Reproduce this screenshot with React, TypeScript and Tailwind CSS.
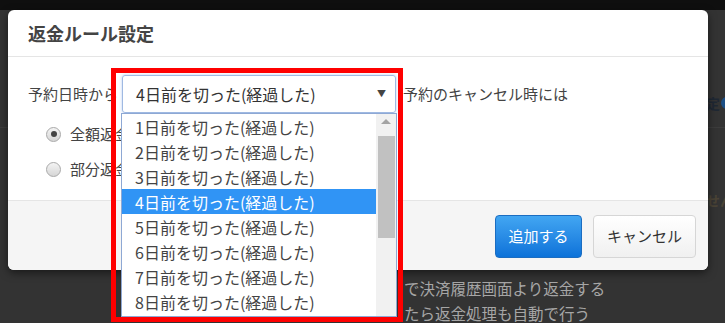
import React from 'react';

const font = { fontFamily: '"Noto Sans CJK JP", "Noto Sans", sans-serif' };

const options = Array.from({ length: 8 }, (_, i) => `${i + 1}日前を切った(経過した)`);

const Radio: React.FC<{ checked?: boolean }> = ({ checked }) => (
  <span className="flex h-[15px] w-[15px] items-center justify-center rounded-full border border-[#a9a9a9] bg-gradient-to-b from-[#f4f4f4] to-[#d6d6d6]">
    {checked && <span className="h-[6px] w-[6px] rounded-full bg-[#444]" />}
  </span>
);

const App: React.FC = () => {
  return (
    <div className="relative h-[323px] w-[725px] overflow-hidden bg-[#333333]" style={font}>
      {/* dimmed page behind the modal */}
      <div className="h-[10px] bg-[#0f0f0f]" />
      <div className="flex flex-col">
        <div className="flex h-[118px] items-start border-b border-[#3c3c3c] pl-[692px] pt-[83px] text-[14px] font-bold text-[#1f2833]">
          <span className="whitespace-nowrap leading-[20px]">設定</span>
          <span className="ml-[1px] mt-[4px] h-[12px] w-[12px] shrink-0 rounded-full bg-[#1c4f85]" />
        </div>
        <div className="h-[62px] pl-[692px] pt-[62px] text-[14px] font-bold whitespace-nowrap text-[#4a4336]">
          設せん
        </div>
        <div className="mt-[86px] pl-[404px] text-[15.5px] leading-[25px] whitespace-nowrap text-[#a6a6a6]">
          <p>で決済履歴画面より返金する</p>
          <p>たら返金処理も自動で行う</p>
        </div>
      </div>

      {/* modal */}
      <div className="absolute left-[8px] top-[10px] flex h-[260px] w-[700px] flex-col overflow-hidden rounded-[6px] bg-white shadow-[0_3px_9px_rgba(0,0,0,0.5)]">
        <div className="flex h-[47px] items-center border-b border-[#e5e5e5] pl-[20px]">
          <h3 className="text-[18px] font-bold text-[#444]">返金ルール設定</h3>
        </div>
        <div className="flex h-[143px] flex-col pl-[20px] pt-[18px] text-[15px] text-[#444]">
          <div className="flex items-center">
            <span className="w-[94px] whitespace-nowrap">予約日時から</span>
            <div className="flex h-[38px] w-[274px] items-center justify-between rounded-[3px] border border-[#9fb9e2] pl-[13px] pr-[9px] text-[16px] text-[#333] shadow-[0_0_3px_rgba(102,150,230,0.5)]">
              <span>4日前を切った(経過した)</span>
              <span className="text-[9px] text-[#444]">▼</span>
            </div>
            <span className="ml-[7px] whitespace-nowrap">予約のキャンセル時には</span>
          </div>
          <div className="mt-[7px] flex h-[28px] items-center gap-[9px] pl-[18px]">
            <Radio checked />
            <span>全額返金する</span>
          </div>
          <div className="mt-[7px] flex h-[28px] items-center gap-[9px] pl-[18px]">
            <Radio />
            <span>部分返金する</span>
          </div>
        </div>
        <div className="flex flex-1 items-start justify-end gap-[11px] border-t border-[#e5e5e5] bg-[#f5f5f5] pr-[12px] pt-[14px] text-[15px]">
          <button className="h-[43px] w-[87px] rounded-[4px] border border-[#1b6dc1] bg-gradient-to-b from-[#42a6f2] to-[#0b72d9] text-white">
            追加する
          </button>
          <button className="h-[43px] w-[103px] rounded-[4px] border border-[#d6d6d6] bg-gradient-to-b from-white to-[#f0f0f0] text-[#333]">
            キャンセル
          </button>
        </div>
      </div>

      {/* open select list */}
      <div className="absolute left-[121px] top-[113px] flex h-[204px] w-[276px] border border-[#8ea8d4] bg-white text-[16px] text-[#444]">
        <div className="flex flex-1 flex-col">
          {options.map((o, i) => (
            <div
              key={o}
              className={`flex h-[25px] shrink-0 items-center pl-[13px] ${i === 3 ? 'bg-[#3094f5] text-white' : ''}`}
            >
              {o}
            </div>
          ))}
        </div>
        <div className="flex w-[20px] flex-col items-center bg-[#f1f1f1] pt-[5px]">
          <span className="h-0 w-0 border-x-[5px] border-b-[5px] border-x-transparent border-b-[#a3a3a3]" />
          <span className="mt-[12px] h-[102px] w-[17px] bg-[#c1c1c1]" />
        </div>
      </div>

      {/* red highlight */}
      <div className="pointer-events-none absolute left-[111px] top-[68px] h-[254px] w-[292px] border-[5px] border-[#ff0000]" />
    </div>
  );
};

export default App;
